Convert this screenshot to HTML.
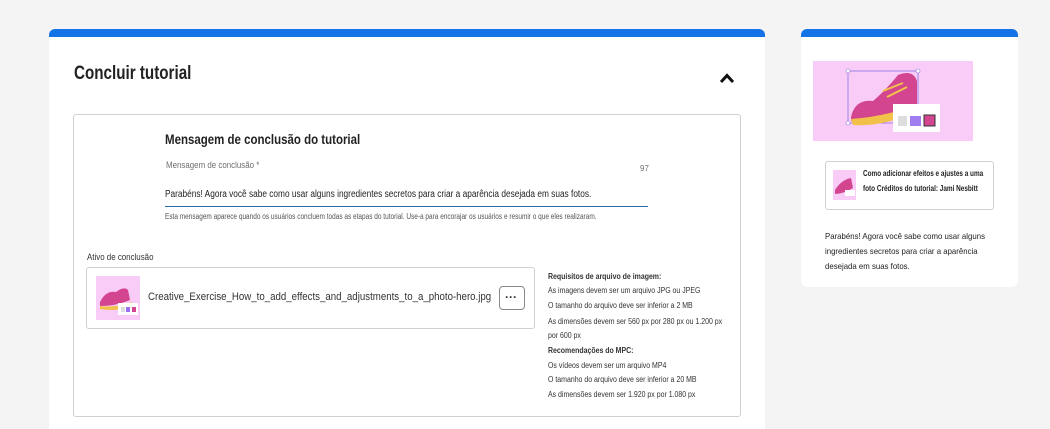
<!DOCTYPE html>
<html><head><meta charset="utf-8"><style>
*{margin:0;padding:0;box-sizing:border-box}
body{width:1050px;height:423px;background:#f4f4f4;font-family:"Liberation Sans",sans-serif;color:#2c2c2c;position:relative;overflow:hidden}
.a{position:absolute;white-space:nowrap;transform-origin:0 0}
.card{position:absolute;background:#fff;border-radius:6px 6px 0 0;overflow:hidden}
.bar{position:absolute;left:0;top:0;right:0;height:8px;background:#1473e6}
.box{position:absolute;border:1px solid #d0d0d0;border-radius:3px;background:#fff}
.req{font-size:8px;color:#333;transform:scaleX(.87)}
</style></head><body>
<div class="card" style="left:49px;top:29px;width:716px;height:400px"><div class="bar"></div></div>
<div class="a" style="left:74px;top:63px;font-size:19px;font-weight:bold;color:#222;transform:scaleX(.8)">Concluir tutorial</div>
<svg class="a" style="left:719px;top:72px" width="16" height="12" viewBox="0 0 16 12"><path d="M2 10 L8 3.5 L14 10" stroke="#111" stroke-width="3" fill="none"/></svg>
<div class="box" style="left:73px;top:114px;width:668px;height:303px"></div>
<div class="a" style="left:165px;top:131px;font-size:14px;font-weight:bold;color:#222;transform:scaleX(.82)">Mensagem de conclusão do tutorial</div>
<div class="a" style="left:166px;top:160px;font-size:9px;color:#6e6e6e;transform:scaleX(.88)">Mensagem de conclusão *</div>
<div class="a" style="left:640px;top:164px;font-size:8px;color:#6e6e6e">97</div>
<div class="a" style="left:165px;top:189px;font-size:10px;color:#222;transform:scaleX(.83)">Parabéns! Agora você sabe como usar alguns ingredientes secretos para criar a aparência desejada em suas fotos.</div>
<div class="a" style="left:165px;top:206px;width:483px;height:1px;background:#2d6ba4"></div>
<div class="a" style="left:165px;top:212px;font-size:8px;color:#555;transform:scaleX(.81)">Esta mensagem aparece quando os usuários concluem todas as etapas do tutorial. Use-a para encorajar os usuários e resumir o que eles realizaram.</div>
<div class="a" style="left:87px;top:252px;font-size:9px;color:#333;transform:scaleX(.88)">Ativo de conclusão</div>
<div class="box" style="left:86px;top:267px;width:449px;height:62px"></div>
<svg class="a" style="left:96px;top:276px" width="44" height="44" viewBox="0 0 44 44"><rect width="44" height="44" fill="#f9ccf7"/><path d="M4 26 Q10 14 20 16 Q28 10 32 14 L34 24 Q20 30 4 30Z" fill="#d3468f"/><path d="M4 30 Q20 32 36 26 L36 30 Q20 36 4 33Z" fill="#f2c14a"/><rect x="22" y="27" width="20" height="12" fill="#fff"/><rect x="25" y="31" width="4" height="5" fill="#ddd"/><rect x="30" y="31" width="4" height="5" fill="#9a6ef0"/><rect x="36" y="31" width="4" height="5" fill="#d3468f"/></svg>
<div class="a" style="left:148px;top:291px;font-size:11px;color:#333;transform:scaleX(.88)">Creative_Exercise_How_to_add_effects_and_adjustments_to_a_photo-hero.jpg</div>
<div class="box" style="left:499px;top:286px;width:26px;height:24px;border-color:#888;border-radius:4px"></div>
<div class="a" style="left:505px;top:290px;font-size:12px;font-weight:bold;color:#333">···</div>
<div class="a req" style="left:548px;top:272px;font-weight:bold">Requisitos de arquivo de imagem:</div>
<div class="a req" style="left:548px;top:286px">As imagens devem ser um arquivo JPG ou JPEG</div>
<div class="a req" style="left:548px;top:301px">O tamanho do arquivo deve ser inferior a 2 MB</div>
<div class="a req" style="left:548px;top:317px">As dimensões devem ser 560 px por 280 px ou 1.200 px</div>
<div class="a req" style="left:548px;top:331px">por 600 px</div>
<div class="a req" style="left:548px;top:346px;font-weight:bold">Recomendações do MPC:</div>
<div class="a req" style="left:548px;top:361px">Os vídeos devem ser um arquivo MP4</div>
<div class="a req" style="left:548px;top:375px">O tamanho do arquivo deve ser inferior a 20 MB</div>
<div class="a req" style="left:548px;top:390px">As dimensões devem ser 1.920 px por 1.080 px</div>

<div class="card" style="left:801px;top:29px;width:217px;height:258px;border-radius:6px"><div class="bar"></div></div>
<svg class="a" style="left:813px;top:61px" width="160" height="80" viewBox="0 0 160 80"><rect width="160" height="80" fill="#f9ccf7"/><rect x="35" y="10" width="70" height="52" fill="none" stroke="#8a6de0" stroke-width=".8"/><path d="M38 56 Q42 38 60 40 Q72 30 85 14 Q100 8 104 20 L104 44 Q70 56 38 60Z" fill="#d3468f"/><path d="M38 58 Q70 56 104 44 L106 50 Q70 66 40 64Z" fill="#f2c14a"/><path d="M70 30 L90 22 M74 36 L94 26" stroke="#f2c14a" stroke-width="2"/><rect x="80" y="43" width="47" height="28" fill="#fff"/><rect x="85" y="55" width="9" height="10" fill="#ddd"/><rect x="97" y="55" width="11" height="10" fill="#a07ef0"/><rect x="111" y="54" width="11" height="11" fill="#d3468f" stroke="#333"/><circle cx="35" cy="10" r="2" fill="#fff" stroke="#8a6de0" stroke-width=".6"/><circle cx="105" cy="10" r="2" fill="#fff" stroke="#8a6de0" stroke-width=".6"/><circle cx="35" cy="62" r="2" fill="#fff" stroke="#8a6de0" stroke-width=".6"/></svg>
<div class="box" style="left:825px;top:161px;width:169px;height:49px"></div>
<svg class="a" style="left:833px;top:170px" width="23" height="30" viewBox="0 0 23 30"><rect width="23" height="30" fill="#f9ccf7"/><path d="M2 20 Q8 10 18 8 L20 18 Q10 24 2 24Z" fill="#d3468f"/><rect x="12" y="20" width="10" height="6" fill="#fff"/></svg>
<div class="a" style="left:863px;top:166px;font-size:8px;font-weight:bold;color:#222;transform:scaleX(.8);line-height:15px">Como adicionar efeitos e ajustes a uma<br>foto Créditos do tutorial: Jami Nesbitt</div>
<div class="a" style="left:825px;top:229px;font-size:8.5px;color:#222;transform:scaleX(.92);line-height:15px">Parabéns! Agora você sabe como usar alguns<br>ingredientes secretos para criar a aparência<br>desejada em suas fotos.</div>
</body></html>
